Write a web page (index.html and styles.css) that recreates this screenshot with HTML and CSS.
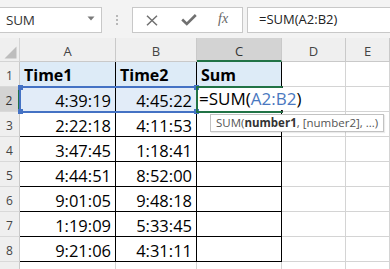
FILE: index.html
```html
<!DOCTYPE html>
<html>
<head>
<meta charset="utf-8">
<link rel="stylesheet" href="styles.css">
</head>
<body>
<div class="app">
  <div class="toolbar">
    <div class="namebox">
      <span class="nb-text">SUM</span>
      <svg class="nb-arrow" width="8" height="5" viewBox="0 0 8 5"><path d="M0.5 0.5 L7.5 0.5 L4 4.5 Z" fill="#7a7a7a"/></svg>
    </div>
    <div class="sep"><span></span><span></span><span></span></div>
    <div class="buttons">
      <svg class="btn-x" width="12" height="11" viewBox="0 0 12 11"><path d="M1 0.8 L11 10.2 M11 0.8 L1 10.2" stroke="#707070" stroke-width="1.5" fill="none"/></svg>
      <svg class="btn-check" width="16" height="12" viewBox="0 0 16 12"><path d="M1.2 5.5 L5.8 10 L14.8 1" stroke="#707070" stroke-width="2.6" fill="none"/></svg>
      <span class="btn-fx">fx</span>
    </div>
    <div class="formula">=SUM(A2:B2)</div>
  </div>

  <div class="sheet">
    <div class="grid">
      <div class="corner"><svg width="13" height="13" viewBox="0 0 13 13"><path d="M12.5 0.5 L12.5 12.5 L0.5 12.5 Z" fill="#bdbdbd"/></svg></div>
      <div class="colh">A</div>
      <div class="colh">B</div>
      <div class="colh sel">C</div>
      <div class="colh">D</div>
      <div class="colh last">E</div>

      <div class="rowh">1</div>
      <div class="cell t hdr">Time1</div>
      <div class="cell t hdr">Time2</div>
      <div class="cell t hdr">Sum</div>
      <div class="cell"></div>
      <div class="cell"></div>

      <div class="rowh sel">2</div>
      <div class="cell t num ref">4:39:19</div>
      <div class="cell t num ref">4:45:22</div>
      <div class="cell t"></div>
      <div class="cell"></div>
      <div class="cell"></div>

      <div class="rowh">3</div>
      <div class="cell t num">2:22:18</div>
      <div class="cell t num">4:11:53</div>
      <div class="cell t"></div>
      <div class="cell"></div>
      <div class="cell"></div>

      <div class="rowh">4</div>
      <div class="cell t num">3:47:45</div>
      <div class="cell t num">1:18:41</div>
      <div class="cell t"></div>
      <div class="cell"></div>
      <div class="cell"></div>

      <div class="rowh">5</div>
      <div class="cell t num">4:44:51</div>
      <div class="cell t num">8:52:00</div>
      <div class="cell t"></div>
      <div class="cell"></div>
      <div class="cell"></div>

      <div class="rowh">6</div>
      <div class="cell t num">9:01:05</div>
      <div class="cell t num">9:48:18</div>
      <div class="cell t"></div>
      <div class="cell"></div>
      <div class="cell"></div>

      <div class="rowh">7</div>
      <div class="cell t num">1:19:09</div>
      <div class="cell t num">5:33:45</div>
      <div class="cell t"></div>
      <div class="cell"></div>
      <div class="cell"></div>

      <div class="rowh">8</div>
      <div class="cell t num">9:21:06</div>
      <div class="cell t num">4:31:11</div>
      <div class="cell t"></div>
      <div class="cell"></div>
      <div class="cell"></div>

      <div class="rowh"></div>
      <div class="cell"></div>
      <div class="cell"></div>
      <div class="cell"></div>
      <div class="cell"></div>
      <div class="cell"></div>
    </div>

    <div class="refbox">
      <i class="h tl"></i><i class="h tr"></i><i class="h bl"></i><i class="h br"></i>
    </div>
    <div class="active"></div>
    <div class="edit">=SUM(<span class="refc">A2:B2</span>)</div>
    <div class="tip">SUM(<b>number1</b>, [number2], ...)</div>
  </div>
</div>
</body>
</html>
```

FILE: styles.css
```css
html, body {
  margin: 0;
  padding: 0;
  background: #ffffff;
}
.app {
  width: 390px;
  height: 269px;
  overflow: hidden;
  font-family: "Open Sans", "Liberation Sans", sans-serif;
}
.toolbar {
  height: 38px;
  background: #f3f3f3;
  display: flex;
  align-items: flex-start;
  padding-top: 7px;
  box-sizing: border-box;
}
.namebox {
  width: 102px;
  height: 26px;
  box-sizing: border-box;
  background: #fff;
  border: 1px solid #c8c8c8;
  border-left: none;
  display: flex;
  align-items: center;
  justify-content: space-between;
  padding: 0 6px 0 6px;
  flex: none;
}
.nb-text {
  font-size: 13.5px;
  color: #333;
  letter-spacing: -0.2px;
}
.nb-arrow {
  margin-top: -3px;
}
.sep {
  width: 30px;
  height: 26px;
  flex: none;
  display: flex;
  flex-direction: column;
  align-items: center;
  justify-content: center;
  gap: 2px;
}
.sep span {
  width: 2px;
  height: 2px;
  background: #b8b8b8;
}
.buttons {
  width: 111px;
  height: 26px;
  box-sizing: border-box;
  background: #fff;
  border: 1px solid #c8c8c8;
  flex: none;
  display: flex;
  align-items: center;
  position: relative;
}
.btn-x {
  margin-left: 13px;
}
.btn-check {
  margin-left: 23px;
}
.btn-fx {
  margin-left: 21px;
  font-family: "Liberation Serif", serif;
  font-style: italic;
  font-size: 14px;
  color: #666;
  margin-top: -2px;
}
.formula {
  flex: 1;
  margin-left: 4px;
  height: 26px;
  box-sizing: border-box;
  background: #fff;
  border: 1px solid #c8c8c8;
  border-right: none;
  font-size: 13px;
  color: #222;
  padding-left: 11px;
  line-height: 23px;
}
.sheet {
  position: relative;
}
.grid {
  display: grid;
  grid-template-columns: 20px 96px 81px 85px 64px 1fr;
  grid-template-rows: 24px repeat(9, 25px);
}
.grid > div {
  box-sizing: border-box;
  border-right: 1px solid #d4d4d4;
  border-bottom: 1px solid #d4d4d4;
}
.corner {
  background: #efefef;
  display: flex;
  align-items: flex-end;
  justify-content: flex-end;
  padding: 0 2px 2px 0;
}
.corner svg {
  display: block;
}
.colh {
  background: #efefef;
  font-size: 13px;
  color: #444;
  display: flex;
  align-items: center;
  justify-content: center;
  padding-top: 3px;
}
.grid > .colh {
  border-right-color: #c9c9c9;
  border-bottom-color: #c9c9c9;
}
.grid > .colh.sel {
  background: #d3d3d3;
  border-bottom: 2px solid #217346;
  color: #333;
}
.rowh {
  background: #efefef;
  font-size: 12px;
  color: #444;
  display: flex;
  align-items: center;
  justify-content: center;
  padding-top: 2px;
}
.grid > .rowh {
  border-right-color: #c9c9c9;
  border-bottom-color: #d9d9d9;
}
.grid > .rowh.sel {
  background: #d3d3d3;
  border-right: 2px solid #217346;
  color: #333;
}
.cell {
  font-size: 16.5px;
  color: #000;
  display: flex;
  align-items: center;
  padding-top: 2px;
  white-space: nowrap;
}
.grid > .cell.t {
  border-right-color: #000;
  border-bottom-color: #000;
}
.hdr {
  background: #ddebf7;
  font-weight: bold;
  padding-left: 4px;
  font-size: 16px;
}
.num {
  justify-content: flex-end;
  padding-right: 4px;
}
.ref {
  background: #e2ecf8;
}
.refbox {
  position: absolute;
  left: 19px;
  top: 48px;
  width: 179px;
  height: 27px;
  box-sizing: border-box;
  border: 2px solid #4472c4;
}
.h {
  position: absolute;
  width: 5px;
  height: 5px;
  background: #4472c4;
}
.tl { left: -3px; top: -3px; }
.tr { right: -3px; top: -3px; }
.bl { left: -3px; bottom: -3px; }
.br { right: -3px; bottom: -3px; }
.active {
  position: absolute;
  left: 196px;
  top: 48px;
  width: 87px;
  height: 27px;
  box-sizing: border-box;
  border: 2px solid #217346;
  border-right: 1px solid #333;
}
.edit {
  position: absolute;
  left: 199px;
  top: 50px;
  height: 22px;
  line-height: 22px;
  font-size: 17px;
  color: #000;
  white-space: nowrap;
  background: #fff;
  padding-right: 1px;
}
.refc {
  color: #4a78c0;
}
.tip {
  position: absolute;
  left: 210px;
  top: 76px;
  width: 174px;
  height: 18px;
  box-sizing: border-box;
  background: #fff;
  border: 1px solid #c2c2c2;
  box-shadow: 1px 1px 1px rgba(0,0,0,0.08);
  font-size: 11.5px;
  color: #555;
  line-height: 16px;
  padding-left: 5px;
  white-space: nowrap;
}
.tip b {
  color: #333;
}
```
